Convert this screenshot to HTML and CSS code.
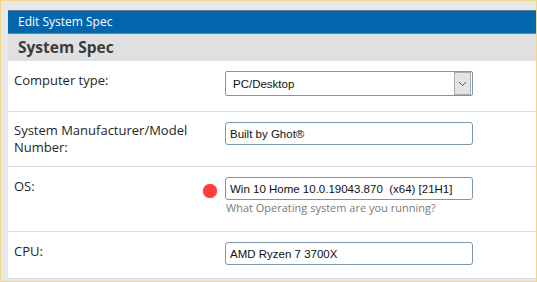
FILE: index.html
```html
<!DOCTYPE html>
<html>
<head>
<meta charset="utf-8">
<link rel="stylesheet" href="styles.css">
</head>
<body>
<div class="frame">
  <div class="panel">
    <div class="titlebar">Edit System Spec</div>
    <h2 class="section">System Spec</h2>
    <div class="row">
      <div class="label">Computer type:</div>
      <div class="control">
        <div class="select">
          <span class="select-value">PC/Desktop</span>
          <span class="select-btn">
            <svg width="9" height="6" viewBox="0 0 9 6"><path d="M1 1 L4.5 4.5 L8 1" fill="none" stroke="#555" stroke-width="1"/></svg>
          </span>
        </div>
      </div>
    </div>
    <div class="row row-tall">
      <div class="label">System Manufacturer/Model<br>Number:</div>
      <div class="control">
        <input class="text" type="text" value="Built by Ghot®">
      </div>
    </div>
    <div class="row">
      <div class="label">OS:</div>
      <div class="marker"><span class="dot"></span></div>
      <div class="control">
        <input class="text" type="text" value="Win 10 Home 10.0.19043.870  (x64) [21H1]">
        <div class="hint">What Operating system are you running?</div>
      </div>
    </div>
    <div class="row">
      <div class="label">CPU:</div>
      <div class="control">
        <input class="text" type="text" value="AMD Ryzen 7 3700X">
      </div>
    </div>
  </div>
</div>
</body>
</html>
```

FILE: styles.css
```css
html, body {
  margin: 0;
  padding: 0;
}
body {
  width: 537px;
  height: 282px;
  overflow: hidden;
}
.frame {
  box-sizing: border-box;
  width: 537px;
  height: 282px;
  background: #e8e8e8;
  border: 1px solid #f2d68f;
  padding: 9px 0 0 7px;
  overflow: hidden;
}
.panel {
  background: #ffffff;
  font-family: "Open Sans", "DejaVu Sans", sans-serif;
}
.titlebar {
  box-sizing: border-box;
  height: 24px;
  background: #0266ad;
  border-top: 1px solid #5b7a96;
  border-bottom: 1px solid #6b8194;
  color: #ffffff;
  font-size: 12px;
  line-height: 21px;
  padding-left: 10px;
}
.section {
  margin: 0;
  height: 27px;
  background: #e0e0e0;
  color: #3c3c3c;
  font-size: 15.5px;
  font-weight: bold;
  line-height: 27px;
  padding-left: 10px;
}
.row {
  display: flex;
  padding: 10px 0 15px 6px;
  border-bottom: 1px solid #d4dee8;
}
.row-tall {
  padding-bottom: 10px;
}
.row:last-child {
  padding-bottom: 13px;
}
.label {
  width: 180px;
  font-size: 13px;
  line-height: 16px;
  color: #262626;
  padding-top: 1px;
}
.row-tall .label {
  padding-top: 0;
  line-height: 17px;
}
.marker {
  width: 31px;
  display: flex;
  justify-content: center;
  padding-top: 7px;
}
.dot {
  width: 14px;
  height: 14px;
  border-radius: 50%;
  background: #ff3c3c;
  box-shadow: 0 0 1px #ff6060;
}
.label + .control {
  margin-left: 31px;
}
.control {
  width: 248px;
}
.select {
  box-sizing: border-box;
  height: 25px;
  border: 1px solid #7c96aa;
  border-radius: 2px;
  display: flex;
  align-items: center;
  padding: 1px;
  background: #fff;
}
.select-value {
  flex: 1;
  font-family: "Liberation Sans", Arial, sans-serif;
  font-size: 11.5px;
  color: #111;
  padding-left: 6px;
}
.select-btn {
  box-sizing: border-box;
  width: 17px;
  height: 23px;
  background: #e4e4e4;
  border: 1px solid #acacac;
  display: flex;
  align-items: center;
  justify-content: center;
}
.text {
  box-sizing: border-box;
  display: block;
  width: 248px;
  height: 23px;
  margin: 0;
  border: 1px solid #7c96aa;
  border-radius: 3px;
  padding: 0 0 0 4px;
  font-family: "Liberation Sans", Arial, sans-serif;
  font-size: 11.5px;
  color: #111;
  background: #fff;
  outline: none;
}
.hint {
  font-size: 11px;
  line-height: 16px;
  color: #7a7a7a;
  padding-left: 1px;
}
```
